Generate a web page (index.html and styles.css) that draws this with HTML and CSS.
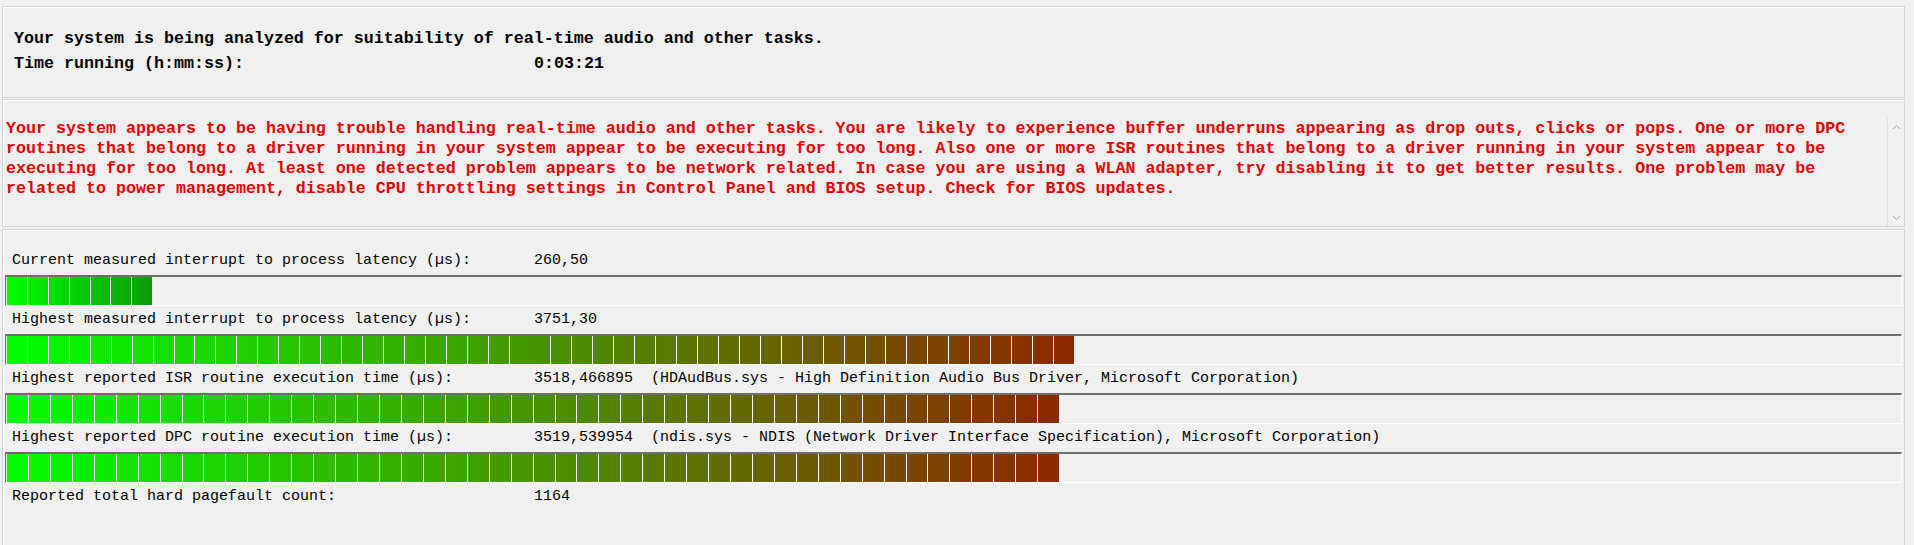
FILE: index.html
```html
<!DOCTYPE html>
<html lang="en">
<head>
<meta charset="utf-8">
<title>LatencyMon</title>
<link rel="stylesheet" href="styles.css">
</head>
<body>
<div class="panel status">
  <div class="line">Your system is being analyzed for suitability of real-time audio and other tasks.</div>
  <div class="line kv"><span class="k">Time running (h:mm:ss):</span><span class="v">0:03:21</span></div>
</div>
<div class="panel verdict">
  <p class="msg">Your system appears to be having trouble handling real-time audio and other tasks. You are likely to experience buffer underruns appearing as drop outs, clicks or pops. One or more DPC routines that belong to a driver running in your system appear to be executing for too long. Also one or more ISR routines that belong to a driver running in your system appear to be executing for too long. At least one detected problem appears to be network related. In case you are using a WLAN adapter, try disabling it to get better results. One problem may be related to power management, disable CPU throttling settings in Control Panel and BIOS setup. Check for BIOS updates.</p>
  <div class="scroll">
    <div class="btn"><svg width="9" height="6" viewBox="0 0 9 6"><polyline points="1,5 4.5,1.5 8,5" fill="none" stroke="#a9a9a9" stroke-width="1"/></svg></div>
    <div class="btn"><svg width="9" height="6" viewBox="0 0 9 6"><polyline points="1,1 4.5,4.5 8,1" fill="none" stroke="#a9a9a9" stroke-width="1"/></svg></div>
  </div>
</div>
<div class="panel meters">
  <div class="label"><span class="k">Current measured interrupt to process latency (µs):</span><span class="v">260,50</span></div>
  <div class="track"><div class="fill fill-ok" style="width:145px; --seg:20.9px"></div></div>
  <div class="label"><span class="k">Highest measured interrupt to process latency (µs):</span><span class="v">3751,30</span></div>
  <div class="track"><div class="fill fill-bad" style="width:1067px; --seg:20.94px"></div></div>
  <div class="label"><span class="k">Highest reported ISR routine execution time (µs):</span><span class="v">3518,466895  (HDAudBus.sys - High Definition Audio Bus Driver, Microsoft Corporation)</span></div>
  <div class="track"><div class="fill fill-bad" style="width:1052px; --seg:21.94px"></div></div>
  <div class="label"><span class="k">Highest reported DPC routine execution time (µs):</span><span class="v">3519,539954  (ndis.sys - NDIS (Network Driver Interface Specification), Microsoft Corporation)</span></div>
  <div class="track"><div class="fill fill-bad" style="width:1052px; --seg:21.94px"></div></div>
  <div class="label"><span class="k">Reported total hard pagefault count:</span><span class="v">1164</span></div>
</div>
</body>
</html>
```
FILE: styles.css
```css
* { box-sizing: border-box; }
html, body { margin: 0; padding: 0; }
body {
  background: #f0f0f0;
  padding-top: 6px;
  width: 1914px;
  height: 545px;
  overflow: hidden;
  font-family: "Courier New", "Liberation Mono", monospace;
  color: #000;
}
.panel {
  margin: 0 9px 0 2px;
  border: 1px solid #d6d6d6;
  box-shadow: inset 1px 1px 0 #ffffff;
}
.status {
  height: 92px;
  padding: 19px 0 0 11px;
  font-size: 16.67px;
  font-weight: bold;
  line-height: 25px;
}
.line { white-space: pre; }
.kv { display: flex; }
.status .k { width: 520px; flex: none; }
.verdict {
  margin-top: 1px;
  height: 128px;
  display: flex;
}
.msg {
  margin: 0;
  flex: 1;
  padding: 19px 10px 0 3px;
  color: #e80000;
  font-size: 16.67px;
  font-weight: bold;
  line-height: 20px;
}
.scroll {
  width: 17px;
  flex: none;
  margin-top: 18px;
  border-left: 1px solid #dedede;
  display: flex;
  flex-direction: column;
  justify-content: space-between;
}
.btn {
  height: 17px;
  display: flex;
  align-items: center;
  justify-content: center;
}
.btn svg { display: block; }
.meters {
  margin-top: 2px;
  height: 316px;
  border-bottom: 0;
  padding: 17px 2px 0 2px;
}
.label {
  display: flex;
  height: 28px;
  line-height: 28px;
  padding-left: 7px;
  font-size: 15px;
  white-space: pre;
}
.meters .k { width: 522px; flex: none; }
.track {
  height: 31px;
  border-top: 2px solid #6e6e6e;
  border-left: 1px solid #6e6e6e;
  border-bottom: 1px solid #ffffff;
  border-right: 1px solid #ffffff;
  padding-left: 1px;
}
.fill {
  height: 28px;
  background:
    repeating-linear-gradient(to right, transparent 0, transparent calc(var(--seg) - 1px), #ffffff calc(var(--seg) - 1px), #ffffff var(--seg)),
    linear-gradient(to right, #00ff00, var(--end));
}
.fill-ok { --end: #0e9a0e; }
.fill-bad { --end: #8e2700; }
```
